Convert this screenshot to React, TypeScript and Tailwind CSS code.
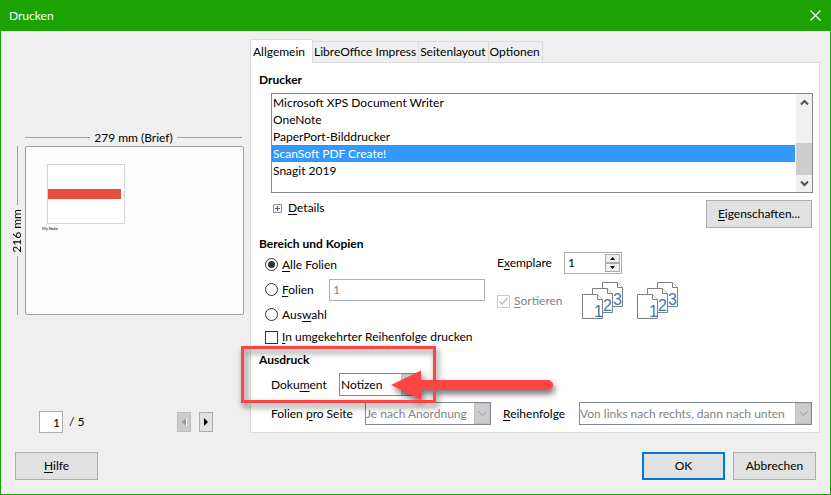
import type { ReactNode } from "react"

const tabs = ["LibreOffice Impress", "Seitenlayout", "Optionen"]

const printers = [
    "Microsoft XPS Document Writer",
    "OneNote",
    "PaperPort-Bilddrucker",
    "ScanSoft PDF Create!",
    "Snagit 2019",
]

// underlined mnemonic letter inside a label
function Key({ children }: { children: ReactNode }) {
    return <u className="underline underline-offset-2">{children}</u>
}

function Heading({ children }: { children: ReactNode }) {
    return <h2 className="font-bold h-4 leading-4">{children}</h2>
}

function PushButton({ children, primary = false }: { children: ReactNode, primary?: boolean }) {
    return (
        <button className={`h-7 w-[83px] bg-[#e1e1e1] ${primary ? "border-2 border-[#0078d7]" : "border border-[#adadad]"}`}>
            {children}
        </button>
    )
}

function Chevron({ up = false, color = "#505050" }) {
    return (
        <svg width="9" height="9" viewBox="0 0 9 9" fill="none" stroke={color} strokeWidth="2">
            <path d={up ? "M1 6.5 4.5 3 8 6.5" : "M1 2.5 4.5 6 8 2.5"} />
        </svg>
    )
}

function Dropdown({ id, value, disabled = false, className = "" }: { id: string, value: string, disabled?: boolean, className?: string }) {
    return (
        <div className={`relative h-[23px] ${className}`}>
            <select
                id={id}
                disabled={disabled}
                className={`appearance-none w-full h-full border border-[#828790] bg-white opacity-100 ${disabled ? "text-[#838383]" : "pl-px text-black"}`}
            >
                <option>{value}</option>
            </select>
            <span className="absolute right-px top-px bottom-px w-4 bg-[#cccccc] border border-[#bfbfbf] flex items-center justify-center pointer-events-none">
                <svg width="9" height="6" viewBox="0 0 9 6" fill="none" stroke="#9a9a9a">
                    <path d="M.5 .5 4.5 4.5 8.5 .5" />
                </svg>
            </span>
        </div>
    )
}

function Radio({ id, checked = false }: { id: string, checked?: boolean }) {
    return (
        <input
            id={id}
            type="radio"
            name="range"
            defaultChecked={checked}
            className="appearance-none shrink-0 size-[13px] rounded-full border border-[#333] bg-white p-[2px] bg-clip-content checked:bg-[#333]"
        />
    )
}

// three overlapping sheets, numbered front to back
function Collate() {
    return (
        <svg width="42" height="38" viewBox="0 0 42 38" fill="#fff" stroke="#7f7f7f" fontFamily="Liberation Sans, sans-serif" fontSize="16">
            <path d="M20.5 .5h15l5 5v19h-20z" />
            <path d="M35.5 .5v5h5" />
            <path d="M10.5 6.5h15l5 5v19h-20z" />
            <path d="M25.5 6.5v5h5" />
            <path d="M.5 12.5h15l5 5v19h-20z" />
            <path d="M15.5 12.5v5h5" />
            <g fill="#3a7ab8" stroke="none">
                <text x="12" y="35">1</text>
                <text x="21" y="29">2</text>
                <text x="31" y="23">3</text>
            </g>
        </svg>
    )
}

function Preview() {
    return (
        <section className="w-[249px] shrink-0 flex flex-col justify-between pl-2 pt-[90px]">
            <div>
                <div className="flex items-center gap-1 h-[17px] pl-4 pr-2">
                    <i className="flex-1 h-px bg-[#a0a0a0]" />
                    <span>279 mm (Brief)</span>
                    <i className="flex-1 h-px bg-[#a0a0a0]" />
                </div>
                <div className="flex pr-1.5">
                    <div className="w-4 h-[169px] flex flex-col items-center gap-1">
                        <i className="flex-1 w-px bg-[#a0a0a0]" />
                        <span className="[writing-mode:vertical-rl] rotate-180 leading-4">216 mm</span>
                        <i className="flex-1 w-px bg-[#a0a0a0]" />
                    </div>
                    <div className="flex-1 bg-[#fdfdfd] border border-[#a0a0a0] rounded-xs px-4 pt-[17px]">
                        <div className="ml-[5px] w-[78px] h-[60px] border border-[#d4d4d4] bg-white pt-6">
                            <div className="w-[73px] h-[10px] bg-[#e74c3c]" />
                        </div>
                        <p className="text-[4px] leading-[10px]">My Notiz</p>
                    </div>
                </div>
            </div>
            <div className="flex items-center pl-[30px] pr-[37px] h-[22px]">
                <input aria-label="Seite" defaultValue="1" className="w-6 h-[22px] border border-[#abadb3] bg-white text-right pr-0.5" />
                <span className="ml-1.5 flex-1">/ 5</span>
                <button aria-label="Vorherige Seite" disabled className="w-[14px] h-5 mr-2 border border-[#bfbfbf] bg-[#cccccc] flex items-center justify-center">
                    <svg width="5" height="8" viewBox="0 0 5 8"><path d="M4 0v8L0 4z" fill="#9a9a9a" /><path d="M4.500 0v8" stroke="#fff" /></svg>
                </button>
                <button aria-label="Nächste Seite" className="w-[14px] h-5 border border-[#adadad] bg-[#e1e1e1] flex items-center justify-center">
                    <svg width="4" height="8" viewBox="0 0 4 8"><path d="M0 0v8l4-4z" /></svg>
                </button>
            </div>
        </section>
    )
}

function PrinterList() {
    return (
        <div className="flex h-[100px] ml-3 border border-[#828790] bg-white">
            <ul role="listbox" aria-label="Drucker" className="flex-1">
                {printers.map((name) => (
                    <li
                        key={name}
                        role="option"
                        aria-selected={name === "ScanSoft PDF Create!"}
                        className="h-[17px] leading-[17px] px-px aria-selected:px-0 aria-selected:leading-[15px] aria-selected:bg-[#3399ff] aria-selected:text-white aria-selected:border aria-selected:border-dotted aria-selected:border-[#cc6600]"
                    >
                        {name}
                    </li>
                ))}
            </ul>
            <div className="ml-px w-4 bg-[#f0f0f0] flex flex-col items-center">
                <span className="h-[49px] pt-1"><Chevron up /></span>
                <span className="h-8 w-full bg-[#cdcdcd]" />
                <span className="pt-1"><Chevron /></span>
            </div>
        </div>
    )
}

function RangeAndCopies() {
    return (
        <div className="flex pl-1.5">
            <div className="w-[232px] flex flex-col">
                <div className="flex items-center gap-1 h-[25px]">
                    <Radio id="all" checked />
                    <label htmlFor="all"><Key>A</Key>lle Folien</label>
                </div>
                <div className="flex items-center gap-1 h-[25px]">
                    <Radio id="slides" />
                    <label htmlFor="slides" className="flex-1"><Key>F</Key>olien</label>
                    <input aria-label="Folienbereich" disabled defaultValue="1" className="w-[156px] h-[22px] mr-3 border border-[#abadb3] bg-white text-[#838383] px-[3px]" />
                </div>
                <div className="flex items-center gap-1 h-[25px]">
                    <Radio id="selection" />
                    <label htmlFor="selection">Aus<Key>w</Key>ahl</label>
                </div>
                <div className="flex items-center gap-1 h-5">
                    <input id="reverse" type="checkbox" className="appearance-none shrink-0 size-[13px] border border-[#333] bg-white" />
                    <label htmlFor="reverse" className="whitespace-nowrap"><Key>I</Key>n umgekehrter Reihenfolge drucken</label>
                </div>
            </div>
            <div className="flex flex-col">
                <div className="flex items-center h-[22px]">
                    <label htmlFor="copies" className="w-[67px]">E<Key>x</Key>emplare</label>
                    <div className="flex w-[58px] h-[22px] p-px border border-[#abadb3] bg-white">
                        <input id="copies" defaultValue="1" className="w-0 flex-1 px-0.5" />
                        <div className="w-[15px] flex flex-col">
                            <button aria-label="Mehr" className="flex-1 border border-[#adadad] bg-[#f0f0f0] flex items-center justify-center">
                                <svg width="5" height="3" viewBox="0 0 5 3"><path d="M0 3h5L2.500 0z" /></svg>
                            </button>
                            <button aria-label="Weniger" className="flex-1 border border-[#adadad] bg-[#f0f0f0] flex items-center justify-center">
                                <svg width="5" height="3" viewBox="0 0 5 3"><path d="M0 0h5L2.500 3z" /></svg>
                            </button>
                        </div>
                    </div>
                </div>
                <div className="flex items-center pt-2 text-[#838383]">
                    <span className="relative mr-1 size-[13px]">
                        <input id="collate" type="checkbox" disabled defaultChecked className="appearance-none block size-[13px] border border-[#cccccc] bg-white" />
                        <svg className="absolute inset-0 pointer-events-none" width="13" height="13" viewBox="0 0 13 13" fill="none" stroke="#bcbcbc" strokeWidth="1.500">
                            <path d="M2.500 6.500 5 9l5.500-6" />
                        </svg>
                    </span>
                    <label htmlFor="collate" className="w-[68px]"><Key>S</Key>ortieren</label>
                    <span className="flex gap-[13px]"><Collate /><Collate /></span>
                </div>
            </div>
        </div>
    )
}

// red marker box with an arrow pointing at the document type
function Callout() {
    return (
        <svg className="absolute -left-[18px] -top-px pointer-events-none" width="330" height="72" viewBox="0 0 330 72" style={{ filter: "drop-shadow(2px 4px 3px rgba(0,0,0,.55))" }}>
            <rect x="1.500" y="1.500" width="192" height="54" fill="none" stroke="#ff4444" strokeWidth="3" />
            <path d="M150 39 180 24.500v9.500h127a5 5 0 0 1 0 10H180v10z" fill="#ff4444" />
        </svg>
    )
}

function GeneralTab() {
    return (
        <div className="border border-[#dcdcdc] bg-white pl-2 pr-1.5 pt-[9px] pb-[7px] flex flex-col">
            <Heading>Drucker</Heading>
            <div className="h-[5px]" />
            <PrinterList />
            <div className="flex justify-between items-start pl-[14px] pr-px pt-[7px]">
                <button className="flex items-center gap-1.5 h-4">
                    <svg width="9" height="9" viewBox="0 0 9 9" fill="#f4f4f4" stroke="#919191">
                        <path d="M.5 .5h8v8h-8z" />
                        <path d="M2 4.500h5M4.500 2v5" stroke="#3b5a9a" />
                    </svg>
                    <span><Key>D</Key>etails</span>
                </button>
                <button className="h-7 w-[106px] border border-[#adadad] bg-[#e1e1e1]"><Key>E</Key>igenschaften...</button>
            </div>
            <div className="pt-2"><Heading>Bereich und Kopien</Heading></div>
            <RangeAndCopies />
            <div className="relative pt-[5px]">
                <Heading>Ausdruck</Heading>
                <div className="flex items-center pl-3 pt-[5px]">
                    <label htmlFor="document" className="w-[68px]">Doku<Key>m</Key>ent</label>
                    <Dropdown id="document" value="Notizen" className="w-[79px]" />
                </div>
                <div className="flex items-center pl-3 pt-1.5 pr-px">
                    <label htmlFor="per-page" className="w-[94px]">Folien <Key>p</Key>ro Seite</label>
                    <Dropdown id="per-page" value="Je nach Anordnung" disabled className="w-[126px]" />
                    <label htmlFor="order" className="w-[76px] ml-3"><Key>R</Key>eihenfolge</label>
                    <Dropdown id="order" value="Von links nach rechts, dann nach unten" disabled className="flex-1" />
                </div>
                <Callout />
            </div>
        </div>
    )
}

export default function App() {
    return (
        <div className="min-h-screen flex flex-col border border-t-0 border-[#1ba303] bg-[#efefef] text-black text-[12px] leading-4 font-['Lato','Open_Sans',sans-serif]">
            <header className="h-[31px] bg-[#1ba303] text-white flex items-center justify-between pl-2 pr-[9px]">
                <h1>Drucken</h1>
                <button aria-label="Schließen">
                    <svg width="11" height="11" viewBox="0 0 11 11" stroke="#fff" strokeWidth="1.200"><path d="M.5 .5l10 10M10.500 .5l-10 10" /></svg>
                </button>
            </header>
            <main className="flex pt-2 pr-[10px]">
                <Preview />
                <section className="flex-1 min-w-0">
                    <div role="tablist" className="flex items-end h-[23px]">
                        <button role="tab" aria-selected="true" className="h-6 w-[63px] -mb-px relative border border-b-0 border-[#dcdcdc] bg-white text-left pl-0.5">Allgemein</button>
                        {tabs.map((tab) => (
                            <button key={tab} role="tab" aria-selected="false" className="h-[21px] pl-px pr-0.5 border border-l-0 border-b-0 border-[#dcdcdc]">{tab}</button>
                        ))}
                    </div>
                    <GeneralTab />
                </section>
            </main>
            <footer className="flex gap-2 pt-[19px] pb-[14px] pl-[14px] pr-[14px]">
                <PushButton><Key>H</Key>ilfe</PushButton>
                <div className="flex-1" />
                <PushButton primary>OK</PushButton>
                <PushButton>Abbrechen</PushButton>
            </footer>
        </div>
    )
}
